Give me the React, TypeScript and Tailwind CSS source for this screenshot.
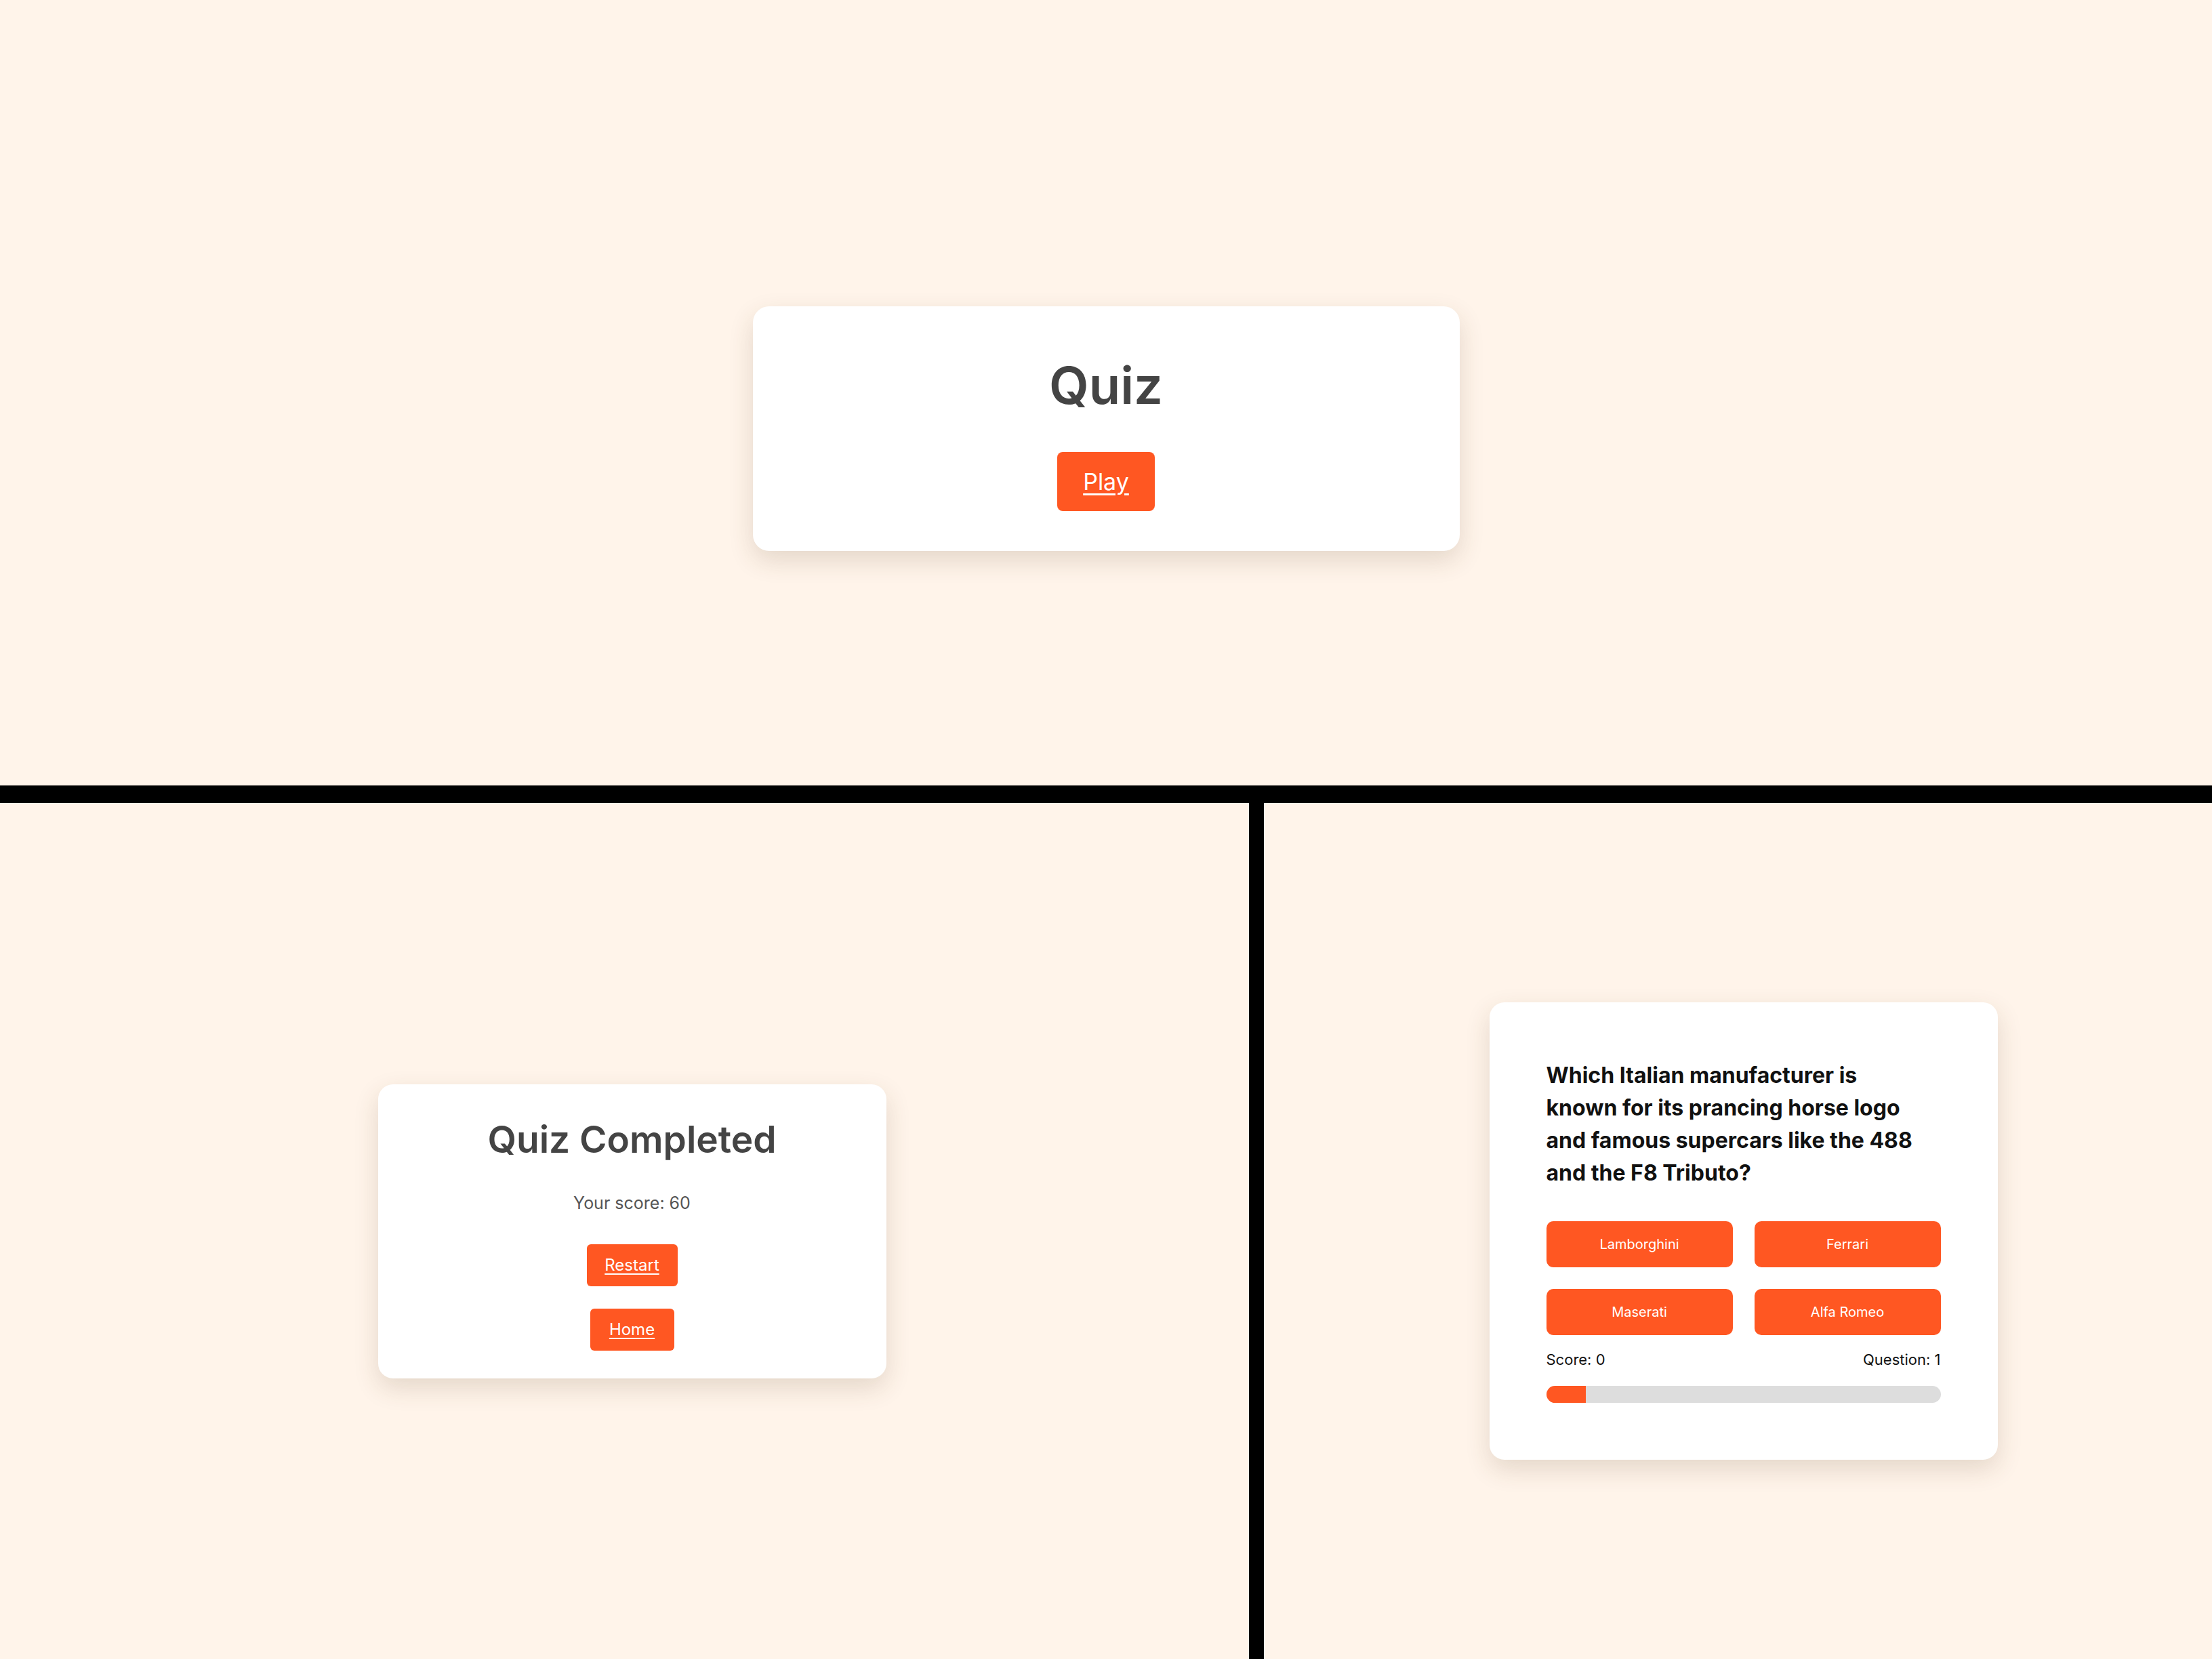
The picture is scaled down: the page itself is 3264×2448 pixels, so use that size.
const answers = ['Lamborghini', 'Ferrari', 'Maserati', 'Alfa Romeo'];

function StartCard() {
  return (
    <div className="flex h-[361px] w-[1043px] flex-col items-center rounded-[24px] bg-white pt-[78px] shadow-[0_14px_36px_rgba(90,60,30,0.16)]">
      <h1 className="text-[76px] font-semibold leading-none text-[#444444]">Quiz</h1>
      <button className="mt-[61px] flex h-[87px] w-[144px] items-center justify-center rounded-[8px] bg-[#ff5722] text-[34px] text-white underline underline-offset-[5px]">
        Play
      </button>
    </div>
  );
}

function ResultCard() {
  return (
    <div className="flex h-[434px] w-[750px] flex-col items-center rounded-[22px] bg-white pt-[54px] shadow-[0_14px_36px_rgba(90,60,30,0.16)]">
      <h2 className="text-[55px] font-semibold leading-none text-[#444444]">Quiz Completed</h2>
      <p className="mt-[54px] text-[25px] leading-none text-[#555555]">Your score: 60</p>
      <button className="mt-[48px] flex h-[62px] w-[134px] items-center justify-center rounded-[6px] bg-[#ff5722] text-[24px] text-white underline underline-offset-[4px]">
        Restart
      </button>
      <button className="mt-[33px] flex h-[62px] w-[124px] items-center justify-center rounded-[6px] bg-[#ff5722] text-[24px] text-white underline underline-offset-[4px]">
        Home
      </button>
    </div>
  );
}

function QuestionCard() {
  const progress = 10;
  return (
    <div className="w-[750px] rounded-[22px] bg-white p-[84px] shadow-[0_14px_36px_rgba(90,60,30,0.16)]">
      <p className="whitespace-nowrap text-[32px] font-bold leading-[48px] text-[#111111]">
        Which Italian manufacturer is
        <br />
        known for its prancing horse logo
        <br />
        and famous supercars like the 488
        <br />
        and the F8 Tributo?
      </p>
      <div className="mt-[47px] grid grid-cols-2 gap-[32px]">
        {answers.map((a) => (
          <button
            key={a}
            className="flex h-[68px] items-center justify-center rounded-[10px] bg-[#ff5722] text-[20px] text-white"
          >
            {a}
          </button>
        ))}
      </div>
      <div className="mt-[25px] flex justify-between text-[22px] leading-none text-[#111111]">
        <span>Score: 0</span>
        <span>Question: 1</span>
      </div>
      <div className="mt-[28px] h-[25px] w-full overflow-hidden rounded-full bg-[#dddddd]">
        <div className="h-full bg-[#ff5722]" style={{ width: `${progress}%` }} />
      </div>
    </div>
  );
}

export default function App() {
  return (
    <div className="flex h-[2448px] w-[3264px] flex-col gap-[26px] bg-black font-['Inter','Noto_Sans',sans-serif]">
      <div className="flex h-[1159px] justify-center bg-[#fff4ea] pt-[452px]">
        <StartCard />
      </div>
      <div className="flex flex-1 gap-[22px]">
        <div className="flex w-[1843px] items-center justify-center bg-[#fff4ea] pl-[22px]">
          <ResultCard />
        </div>
        <div className="flex flex-1 items-center justify-center bg-[#fff4ea] pl-[16px]">
          <QuestionCard />
        </div>
      </div>
    </div>
  );
}
